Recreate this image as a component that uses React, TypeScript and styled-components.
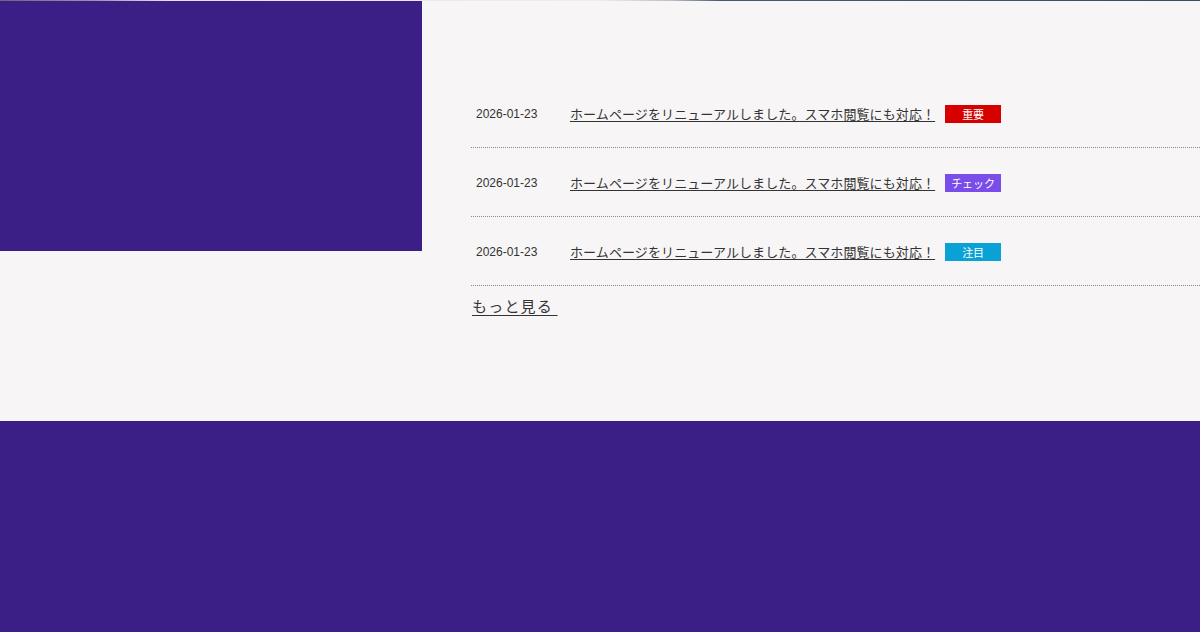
import React from 'react';
import styled, { createGlobalStyle } from 'styled-components';

type Tag = 'important' | 'check' | 'notice';

const news: { id: number; date: string; title: string; tag: Tag; label: string }[] = [
    { id: 1, date: '2026-01-23', title: 'ホームページをリニューアルしました。スマホ閲覧にも対応！', tag: 'important', label: '重要' },
    { id: 2, date: '2026-01-23', title: 'ホームページをリニューアルしました。スマホ閲覧にも対応！', tag: 'check', label: 'チェック' },
    { id: 3, date: '2026-01-23', title: 'ホームページをリニューアルしました。スマホ閲覧にも対応！', tag: 'notice', label: '注目' },
];

const tagColors: Record<Tag, string> = {
    important: '#d60000',
    check: '#7a4deb',
    notice: '#0aa2d6',
};

const App = () => {
    return (
        <>
            <GlobalStyle />
            <TopStrip />
            <Main>
                <Visual />
                <NewsArea>
                    <NewsList>
                        {news.map((item) => (
                            <NewsItem key={item.id}>
                                <NewsDate>{item.date}</NewsDate>
                                <NewsTitle href="#">{item.title}</NewsTitle>
                                <NewsTag tag={item.tag}>{item.label}</NewsTag>
                            </NewsItem>
                        ))}
                    </NewsList>
                    <MoreLink href="#">もっと見る </MoreLink>
                </NewsArea>
            </Main>
            <Footer />
        </>
    );
};

export default App;

const GlobalStyle = createGlobalStyle`
    body {
        margin: 0;
        background: #f7f5f6;
        font-family: "Liberation Sans", "Noto Sans CJK JP", sans-serif;
        color: #333;
        overflow: hidden;
    }
`;

const TopStrip = styled.div`
    height: 1px;
    background: linear-gradient(
        to right,
        #6b6877 0%,
        #9a97a6 8%,
        #e6e4ea 14%,
        #eeedf1 50%,
        #b8c0c8 56%,
        #4c5a6c 60%,
        #3c4a5e 100%
    );
`;

const Main = styled.section`
    display: flex;
    align-items: flex-start;
    height: 420px;
`;

const Visual = styled.div`
    flex: 0 0 422px;
    height: 250px;
    background: #3b1f87;
`;

const NewsArea = styled.div`
    flex: 1;
    padding: 78px 0 0 49px;
`;

const NewsList = styled.ul`
    list-style: none;
    margin: 0;
    padding: 0;
`;

const NewsItem = styled.li`
    display: flex;
    align-items: center;
    height: 68px;
    padding-left: 5px;
    border-bottom: 1px dotted #8a8a8a;
`;

const NewsDate = styled.span`
    flex: 0 0 94px;
    margin-top: 2px;
    font-size: 12px;
    color: #333;
`;

const NewsTitle = styled.a`
    font-family: "Noto Sans CJK JP", sans-serif;
    font-size: 13px;
    letter-spacing: 0.1px;
    color: #333;
    text-decoration: underline;
    text-underline-offset: 2px;
`;

const NewsTag = styled.span<{ tag: Tag }>`
    display: flex;
    align-items: center;
    justify-content: center;
    width: 56px;
    height: 18px;
    margin: 2px 0 0 10px;
    background: ${(props) => tagColors[props.tag]};
    color: #fff;
    font-family: "Noto Sans CJK JP", sans-serif;
    font-size: 11px;
`;

const MoreLink = styled.a`
    display: inline-block;
    margin-top: 9px;
    margin-left: 1px;
    font-family: "Noto Sans CJK JP", sans-serif;
    font-size: 15px;
    line-height: 22px;
    letter-spacing: 1.2px;
    color: #333;
    text-decoration: underline;
    text-underline-offset: 3px;
    white-space: pre;
`;

const Footer = styled.footer`
    height: 240px;
    background: #3b1f87;
`;
